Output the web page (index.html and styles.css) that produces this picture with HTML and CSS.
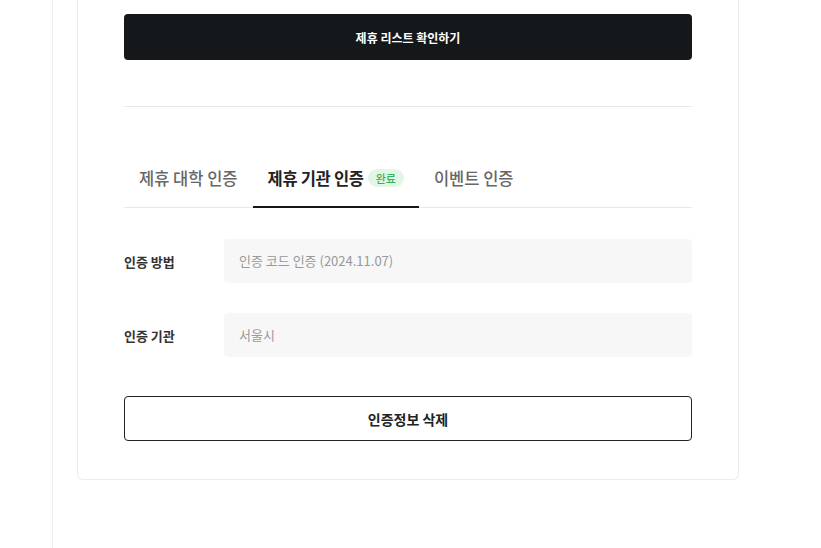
FILE: index.html
```html
<!DOCTYPE html>
<html>
	<head>
		<meta charset="utf-8" />
		<title>제휴 인증</title>
		<link rel="stylesheet" href="styles.css">
	</head>
	<body>
<div class="page">
    <div class="card">
        <button class="btn-dark">제휴 리스트 확인하기</button>
        <hr class="line">
        <ul class="tabs">
            <li>제휴 대학 인증</li>
            <li class="on">제휴 기관 인증 <span class="badge">완료</span></li>
            <li>이벤트 인증</li>
        </ul>
        <div class="form">
            <div class="row">
                <label>인증 방법</label>
                <div class="field">인증 코드 인증 (2024.11.07)</div>
            </div>
            <div class="row">
                <label>인증 기관</label>
                <div class="field">서울시</div>
            </div>
        </div>
        <button class="btn-line">인증정보 삭제</button>
    </div>
</div>
	</body>
</html>
```

FILE: styles.css
```css
* {
    margin: 0;
    padding: 0;
    box-sizing: border-box;
}
body {
    font-family: "Noto Sans CJK KR", "Noto Sans", sans-serif;
    color: #222;
    background: #fff;
}
.page {
    margin-left: 52px;
    border-left: 1px solid #eeeeee;
    min-height: 548px;
    padding-left: 24px;
}
.card {
    width: 662px;
    border: 1px solid #ececec;
    border-top: 0;
    border-radius: 0 0 6px 6px;
    padding: 14px 46px 38px;
}
button {
    font-family: inherit;
    display: block;
    width: 100%;
    cursor: pointer;
}
.btn-dark {
    height: 46px;
    background: #15181b;
    color: #fff;
    border: 0;
    border-radius: 4px;
    font-size: 12px;
    font-weight: 700;
}
.line {
    border: 0;
    border-top: 1px solid #e8e8e8;
    margin-top: 46px;
}
.tabs {
    list-style: none;
    display: flex;
    margin-top: 40px;
    border-bottom: 1px solid #e8e8e8;
}
.tabs li {
    padding: 19px 15px 17px;
    font-size: 16.5px;
    line-height: 24px;
    color: #666;
    font-weight: 500;
    display: flex;
    align-items: center;
    gap: 4px;
}
.tabs .on {
    color: #222;
    font-weight: 700;
    letter-spacing: -0.3px;
    border-bottom: 2px solid #15181b;
    margin-bottom: -1px;
    padding-bottom: 16px;
}
.badge {
    display: inline-block;
    background: #e2f6e5;
    color: #3bb25a;
    font-size: 11px;
    font-weight: 500;
    letter-spacing: 0;
    line-height: 18px;
    padding: 0 8px;
    border-radius: 9px;
}
.form {
    margin-top: 31px;
    display: flex;
    flex-direction: column;
    gap: 30px;
}
.row {
    display: flex;
    align-items: center;
}
.row label {
    width: 100px;
    font-size: 13px;
    font-weight: 700;
    color: #333;
}
.field {
    flex: 1;
    height: 44px;
    line-height: 44px;
    background: #f7f7f7;
    border-radius: 4px;
    padding: 0 15px;
    font-size: 13px;
    color: #999;
}
.btn-line {
    margin-top: 39px;
    height: 45px;
    background: #fff;
    border: 1px solid #222;
    border-radius: 4px;
    font-size: 14px;
    font-weight: 700;
    color: #222;
}
```
